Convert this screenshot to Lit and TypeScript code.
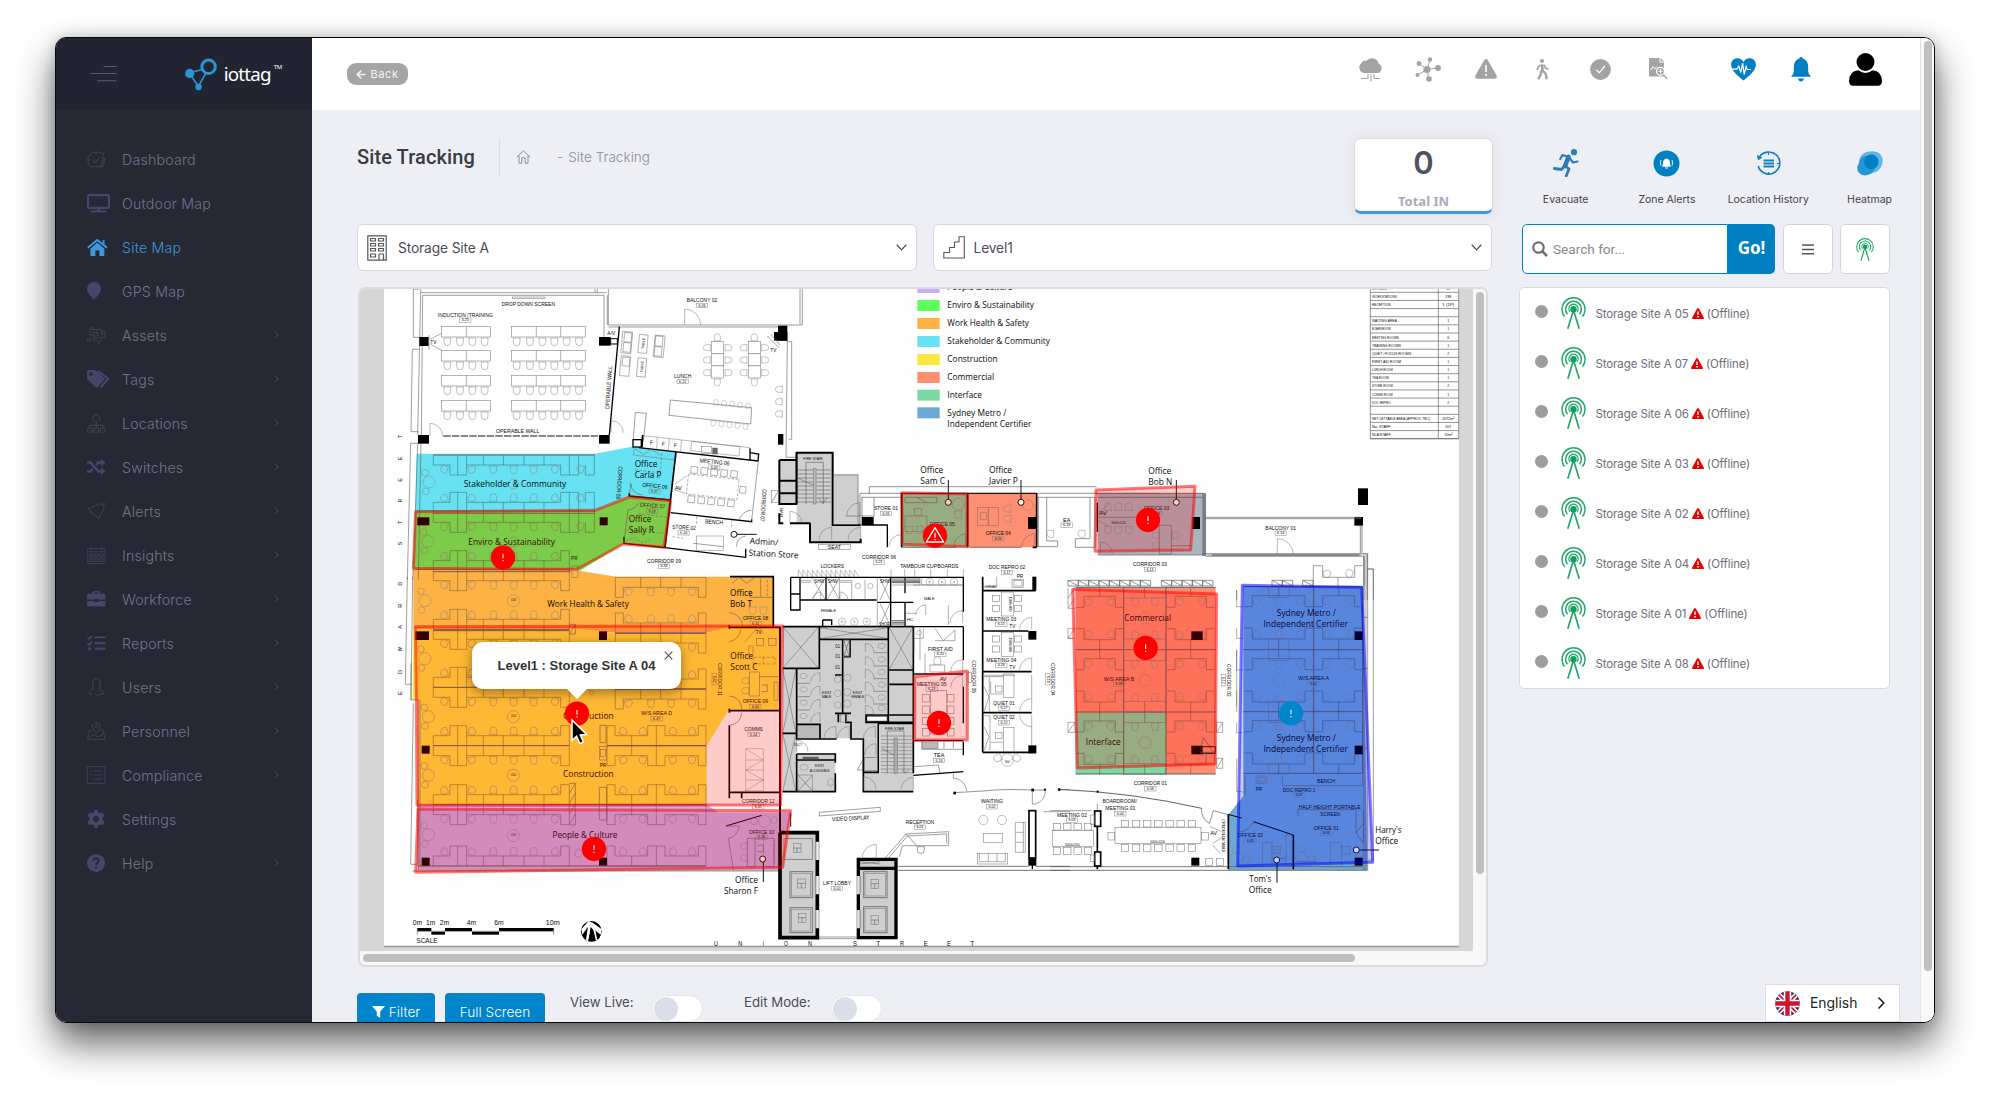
import { LitElement, html, css, svg } from "lit";
import { customElement, property } from "lit/decorators.js";

/* ------------------------------------------------------------------ */
/* Floor plan drawing helpers. Each plan section is drawn at 3x scale. */
/* ------------------------------------------------------------------ */

type Opt = { r?: number; size?: number; a?: string; cls?: string };

const text = (x: number, y: number, s: string, w: number, cls: string, o: Opt = {}) => svg`
  <text class=${cls} x=${x} y=${y} text-anchor=${o.a ?? "middle"} dominant-baseline="central"
    textLength=${w} lengthAdjust="spacingAndGlyphs"
    font-size=${o.size ?? 18} transform=${`rotate(${o.r ?? 0} ${x} ${y})`}>${s}</text>`;

const room = (x: number, y: number, s: string, no = "", w = s.length * 9.1, r = 0, size = 18) => svg`
  ${text(x, y, s, w, "cad", { r, size })}
  ${no
    ? svg`<g transform=${`rotate(${r} ${x} ${y}) translate(${x} ${y + 16})`}>
        <rect class="thin" x="-17" y="-6" width="34" height="13"></rect>
        <text class="cad" x="0" y="1" font-size="11" text-anchor="middle" dominant-baseline="central">${no}</text></g>`
    : ""}`;

const name = (x: number, y: number, s: string, w: number, a = "middle", r = 0) =>
  text(x, y, s, w, "team", { a, r, size: 26 });

const line = (d: string, w = 1.8) => svg`<path class="ln" d=${d} stroke-width=${w}></path>`;
const wall = (d: string, w = 5) => svg`<path class="wall" d=${d} stroke-width=${w}></path>`;
const fill = (d: string, c: string) => svg`<path d=${d} fill=${c}></path>`;
const col = (x: number, y: number, w: number, h: number) =>
  svg`<rect x=${x} y=${y} width=${w} height=${h} fill="#000"></rect>`;
const box = (x: number, y: number, w: number, h: number, f = "none", sw = 1.6, c = "#747474") =>
  svg`<rect x=${x} y=${y} width=${w} height=${h} fill=${f} stroke=${c} stroke-width=${sw}></rect>`;
const ring = (x: number, y: number, r: number) =>
  svg`<circle class="thin" cx=${x} cy=${y} r=${r}></circle>`;
const chair = (x: number, y: number, r = 0, s = 1) => svg`
  <path class="thin" transform=${`translate(${x} ${y}) rotate(${r}) scale(${s})`}
    d="M-12 -11H12M-10 -11V2a10 10 0 0 0 20 0V-11"></path>`;
const swivel = (x: number, y: number, r: number) => svg`
  <g transform=${`translate(${x} ${y}) rotate(${r})`}><path class="thin" d="M-9 -9H8V8M9 9A12 12 0 1 1 -9 -9"></path></g>`;
const pin = (x: number, y: number, d: string) => svg`
  <path d=${d} stroke="#111" stroke-width="3" fill="none"></path>
  <circle cx=${x} cy=${y} r="9" fill="#fff" stroke="#111" stroke-width="3"></circle>`;
const door = (x: number, y: number, r: number, sx: number, sy: number) =>
  line(`M${x} ${y}V${y + r * sy}A${r} ${r} 0 0 ${sx * sy < 0 ? 1 : 0} ${x + r * sx} ${y}`, 1.3);
const section = (x: number, y: number, body: unknown) =>
  svg`<g transform=${`translate(${x} ${y}) scale(.333333)`}>${body}</g>`;

const deskRow = (y: number, d: number, full = false) => svg`
  <g transform=${`translate(0 ${y}) scale(1 ${d})`}>
    <path class="desk" d=${"M250 0V30H300V60H323V0M323 60H350V0M350 30H400V0M400 30H582V0M460 0V30M522 0V30M582 30H632V60H658V0" +
      (full ? "M658 60H686V0M706 30V60H733V0" : "")}></path>
    ${[285, 617, ...(full ? [693] : [])].map((x) => swivel(x, 42, 20))}
    ${swivel(364, 42, 250)}
    ${[430, 491, 551].map((x) => chair(x, 44))}
  </g>`;

const deskRowEast = (y: number, d: number, kind: number) => svg`
  <g transform=${`translate(0 ${y}) scale(1 ${d})`}>
    <path class="desk" d=${kind === 1
      ? "M796 0V60H820V30H872V0M872 30H993V0M932 0V30M993 30H1045V60H1068V0M796 0H1068"
      : "M771 0V60H795V30H893V60H945V30H1045V60H1068V0M845 0V30M919 0V60M771 0H1068"}></path>
    ${kind === 1 ? [903, 963].map((x) => chair(x, 44)) : [swivel(880, 42, 20), swivel(967, 42, 250)]}
    ${swivel(kind === 1 ? 834 : 818, 42, 250)} ${swivel(1028, 42, 20)}
  </g>`;

const podTable = (x: number, y: number) => svg`${ring(x, y, 18)}${ring(x - 12, y - 28, 10)}${ring(x - 10, y + 28, 10)}`;

const pod = (x: number, y: number, w: number) => svg`
  <path class="desk" d=${`M${x} ${y + 60}h24v-33h${w - 48}v33h24M${x} ${y + 124}h24v33h${w - 48}v-33h24M${x + w / 2} ${y}v27M${x + w / 2} ${y + 157}v30`}></path>
  ${swivel(x + 36, y + 42, 250)}${swivel(x + w - 36, y + 42, 20)}
  ${swivel(x + 36, y + 143, 180)}${swivel(x + w - 36, y + 143, 90)}`;

const zone = (pts: string, c: string) =>
  svg`<polygon points=${pts} fill=${c} fill-opacity=".2" stroke=${c} stroke-opacity=".52" stroke-width="9" stroke-linejoin="round"></polygon>`;

const marker = (x: number, y: number, c = "#ff0000", kind = "bang") => svg`
  <circle cx=${x} cy=${y} r="36.5" fill=${c}></circle>
  ${kind === "bang"
    ? svg`<path d=${`M${x} ${y - 11}v14M${x} ${y + 8}v4`} stroke="#fff" stroke-width="3.2"></path>`
    : svg`<path d=${`M${x} ${y - 24}l26 43h-52z`} fill="none" stroke="#fff" stroke-width="4" stroke-linejoin="round"></path>
        <path d=${`M${x} ${y - 9}v15M${x} ${y + 10}v4`} stroke="#fff" stroke-width="4"></path>`}`;

const range = (n: number) => Array.from({ length: n }, (_, i) => i);
const zig = (x0: number, x1: number, y0: number, y1: number, step: number) => {
  let d = `M${x0} ${y0}H${x1}M${x0} ${y1}H${x1}`;
  for (let x = x0; x + step <= x1 + 2; x += step) d += `M${x} ${y0}V${y1}M${x} ${y0}L${x + step} ${y1}V${y0}`;
  return d;
};

/* ---- team colours under the linework ---- */
const teamFills = svg`
  ${section(350, 280, svg`
    ${fill("M200 521H735L845 500L978 516L962 660L838 648L735 693H196Z", "#66e2f2")}
    ${fill("M196 693H735L838 648L962 660L945 805L822 790L690 872H190Z", "#5cff5c")}`)}
  ${section(350, 580, svg`
    ${fill("M190 -32H660L800 -10H1270V142H1140L1070 158H800L690 148H190Z", "#feb244")}
    ${fill("M190 148H690L800 160H1070L1140 140H1290V392H1135L1070 497V680H203V360H188Z", "#fee642")}
    ${fill("M205 672H1068L1105 697H1322L1298 868H205Z", "#c8aeee")}`)}
  ${section(790, 280, svg`${fill("M335 640H533V802H335Z", "#7dd7a2")}${fill("M535 640H740V802H535Z", "#fe8f71")}`)}
  ${section(1060, 280, svg`${fill("M113 640H433V825H113Z", "#a8b5c1")}`)}
  ${section(1050, 560, svg`
    ${fill("M77 82H497V642H77Z", "#fe8f71")}${fill("M77 458H348V642H77Z", "#7dd7a2")}
    ${fill("M580 80H938L952 930H537V762L580 708Z", "#6ea8d4")}`)}`;

/* ---- north-west: training, lunch, stakeholder, enviro ---- */
const northWest = section(350, 280, svg`
  ${line("M190 27V172H210M187 208H206M187 208L183 455H205M212 27V38L203 465M218 46L214 465M212 38H770M218 46H762V172M775 27V135H1357V27M1350 27V133M190 27L205 28M205 490H182L172 900M203 490L196 700L188 900M213 490L205 900")}
  ${line("M772 46V135M775 141H1312M1312 182L1308 532H1345M1325 185V478H1316M1325 185H1312M735 27V38M742 27V38")}
  ${box(487, 51, 100, 5)}
  ${col(208, 171, 28, 27)}${col(747, 171, 35, 26)}${box(782, 176, 20, 16, "#fff", 3, "#000")}
  ${col(204, 465, 33, 26)}${col(747, 465, 32, 26)}${col(1284, 137, 28, 45)}${col(1272, 156, 40, 26)}${col(1284, 462, 16, 32)}
  ${col(202, 712, 36, 24)}${col(749, 712, 24, 24)}
  ${wall("M808 140L778 465", 4)}
  <path d="M280 468H747" stroke="#111" stroke-width="3" stroke-dasharray="22 4"></path>
  ${[139, 211, 286, 361].map((y) => svg`
    ${box(275, y, 147, 32)}${line(`M349 ${y}v32`, 1.4)}${box(484, y, 222, 32)}${line(`M559 ${y}v32M632 ${y}v32`, 1.4)}
    ${[292, 330, 367, 404, 500, 540, 577, 613, 650, 687].map((x) => chair(x, y + 46))}`)}
  ${line("M237 165V210M240 178L275 160M240 192L275 211", 1.5)}
  ${door(240, 468, 38, 1, -1)}${door(1004, 135, 48, 1, -1)}${door(784, 458, 36, 1, -1)}
  ${room(535, 71, "DROP DOWN SCREEN", "", 160)}${room(346, 104, "INDUCTION /TRAINING", "6.25", 165)}
  ${room(503, 453, "OPERABLE WALL", "", 130)}${room(776, 323, "OPERABLE WALL", "", 130, -86)}
  ${room(1056, 60, "BALCONY 02", "6.26", 92)}${room(998, 288, "LUNCH", "6.22", 52)}
  ${room(250, 187, "TV", "", 18)}${room(1270, 209, "TV", "", 18)}${room(784, 160, "A/V", "", 24)}
  ${line("M1252 168L1287 203M1262 162L1290 195")}
  ${[[1085, 1102], [1195, 1213]].map(([x, c]) => svg`
    ${box(x, 184, 36, 110)}${line(`M${x} 221h36M${x} 257h36`)}
    ${[203, 240, 278].map((y) => svg`${chair(x - 14, y, 90, 0.9)}${chair(x + 50, y, -90, 0.9)}`)}
    ${chair(c, 172, 180, 0.9)}${chair(c, 307, 0, 0.9)}`)}
  <g transform="rotate(5 830 190)">${box(815, 155, 30, 65)}${box(821, 158, 22, 28)}${box(821, 188, 22, 28)}${box(866, 160, 26, 55)}
    ${box(913, 158, 30, 65)}${box(915, 160, 22, 30)}${box(915, 192, 22, 28)}${box(817, 228, 28, 60)}${box(822, 232, 22, 26)}${box(868, 230, 26, 56)}</g>
  ${room(880, 190, "TABLE", "", 34, -85, 10)}${room(876, 260, "TABLE", "", 34, -85, 10)}
  ${line("M961 360L1205 383L1202 432L957 406Z")}
  ${[0, 1, 2, 3, 4].map((i) => svg`${chair(1098 + i * 24, 367 + i * 2.5, 185, 0.7)}${chair(1090 + i * 24, 430 + i * 2.5, 5, 0.7)}`)}
  ${[328, 365, 402].map((y) => chair(1287, y, 90, 0.9))}
  ${line("M856 397L889 400L880 482L850 478Z")}
  ${box(849, 479, 25, 22, "#fff", 4, "#000")}${wall("M878 465L876 502")}${wall("M866 503L1225 543", 4)}${wall("M1200 505V540M1200 518L1226 522L1224 543", 4)}
  ${line("M880 467L1200 503M922 472L920 508M958 476L955 512M994 480L992 514M1025 484L1170 500L1167 528L1022 512Z", 1.3)}
  ${box(1054, 500, 30, 20)}${box(1088, 504, 14, 18, "#666")}
  ${text(904, 488, "F", 9, "cad", { r: 5 })}${text(940, 492, "F", 9, "cad", { r: 5 })}${text(976, 496, "F", 9, "cad", { r: 5 })}
  ${deskRow(525, 1, true)}${deskRow(697, -1, true)}${deskRow(697, 1, true)}${deskRow(872, -1)}
  ${line("M250 525H735", 3)}${line("M200 693H735M250 700H735", 2.5)}${line("M196 868H660M250 875H660", 3)}
  ${podTable(237, 606)}${podTable(233, 784)}${ring(490, 612, 15)}${ring(490, 786, 15)}
  ${room(808, 608, "CORRIDOR 08", "", 98, 94)}${room(1240, 676, "CORRIDOR 07", "", 98, 94)}
  ${wall("M978 516L945 803")}${wall("M838 640V648L962 660")}${wall("M822 770V790L945 803", 4)}
  ${wall("M945 803L1187 832V806", 4)}${wall("M962 698L1205 725V718", 4)}
  ${line("M1225 543L1205 720M840 608A40 40 0 0 0 876 645M845 612L838 640M866 668A40 40 0 0 1 834 690M834 690L824 770M1160 800A30 30 0 0 1 1187 768M1205 690A45 45 0 0 0 1166 722")}
  ${line("M853 505L850 525L975 540M855 505L880 524L905 508L930 526", 1.3)}
  <path class="dash" d="M935 520L930 595M855 570L930 578M865 700L948 712M830 750L945 760M828 785L850 772L880 790L905 775M1040 710V735M1145 720V742M968 770L1000 775"></path>
  ${room(915, 618, "OFFICE 06", "6.27", 76, 6)}${room(908, 677, "OFFICE 07", "6.28", 76, 5)}
  ${room(1094, 546, "MEETING 06", "6.32", 90, 6)}${room(1092, 726, "BENCH", "", 54, 3)}
  ${room(1002, 742, "STORE 02", "6.33", 72, 3)}${room(942, 842, "CORRIDOR 09", "6.39", 102)}
  <g transform="rotate(6 1088 619)"><path class="dash" d="M1012 590H1165V650H1012Z"></path>
    ${range(5).map((i) => svg`${box(1018 + i * 30, 566, 20, 20)}${box(1018 + i * 30, 654, 20, 20)}`)}${box(1170, 610, 18, 20)}</g>
  ${line("M975 612L1010 588M975 630L1006 640", 1.3)}${room(985, 624, "AV", "", 22)}
  ${box(1040, 768, 80, 44, "none", 1.4)}${line("M1030 790L1120 800")}${room(673, 834, "PR", "", 20)}${box(666, 858, 18, 34)}
  ${name(495, 611, "Stakeholder & Community", 308)}${name(485, 787, "Enviro & Sustainability", 260)}
  ${name(854, 553, "Office", 68, "start")}${name(854, 586, "Carla P", 80, "start")}
  ${name(836, 717, "Office", 68, "start")}${name(836, 751, "Sally R", 76, "start")}
  ${name(1199, 782, "Admin/", 86, "start", 4)}${name(1196, 818, "Station Store", 150, "start", 3)}
  ${pin(1152, 763, "M1160 763H1220")}
  ${[["T", 470], ["E", 535], ["E", 600], ["R", 662], ["T", 727], ["S", 790], ["D", 912]].map(([c, y]) => text(149, y as number, c as string, 11, "cad", { r: -90, size: 18 }))}
  ${fill("M1288 540H1340V672H1288Z", "#d0d0d0")}${wall("M1288 540H1340M1288 602H1340M1288 640H1340M1288 540V672H1340V518M1288 700V730H1300", 6)}
  ${box(1264, 632, 22, 36)}${line("M1264 668L1286 632")}${room(1297, 697, "RVR", "", 26, -90, 11)}`);

/* ---- north-centre: legend, stair, offices 04/05 ---- */
const legend: [string, string, number, number][] = [
  ["#c8aeee", "People & Culture", 6, 195], ["#5cff5c", "Enviro & Sustainability", 60, 260],
  ["#feb244", "Work Health & Safety", 114, 245], ["#66e2f2", "Stakeholder & Community", 168, 308],
  ["#fee642", "Construction", 222, 151], ["#fe8f71", "Commercial", 276, 140],
  ["#7dd7a2", "Interface", 329, 104], ["#6ea8d4", "Sydney Metro /", 382, 177],
];
const northCentre = section(790, 280, svg`
  ${legend.map(([c, s, y, w]) => svg`<rect x="382" y=${y} width="67" height="33" fill=${c}></rect>${name(472, y + 16, s, w, "start")}`)}
  ${name(472, 433, "Independent Certifier", 252, "start")}
  ${fill("M20 518H128V582H205V640L212 735V785H60V730H20Z", "#cfcfcf")}
  ${wall("M20 672V518H128V735H212M60 728V787H212V776M0 730H60M0 672H22", 6)}
  ${box(130, 585, 74, 148, "none", 2)}${line("M48 547H100V672M48 547V672")}
  ${line(range(9).map((i) => `M24 ${570 + i * 12}H122`).join(""))}${box(70, 565, 8, 107, "#bbb")}${line("M24 595L70 615M86 655L98 670L110 655")}
  ${room(69, 537, "FIRE STAIR", "", 58, 0, 12)}
  ${door(210, 708, 40, -1, -1)}${door(125, 780, 38, -1, -1)}${door(212, 780, 38, -1, -1)}${door(0, 730, 36, 1, -1)}
  ${line("M168 708H250")}${box(85, 793, 97, 15)}${room(133, 800, "SEAT", "", 40)}
  ${line("M238 642V620H920M210 640H1110M214 652H335M740 652H915M210 640V735M216 652V711M252 652V711M745 652V800H803V783H770V652M915 652V802H856V776H900V652", 2)}
  ${wall("M335 640H740", 3)}
  ${col(215, 711, 36, 24)}${col(714, 711, 26, 36)}${wall("M215 735H292V802", 4)}${wall("M335 640V802M533 640V802M740 640V802M728 802H740", 5)}
  ${line("M335 802H500M538 802H694", 2.5)}${door(333, 800, 36, -1, -1)}${door(528, 798, 36, -1, -1)}${door(733, 800, 38, -1, -1)}
  ${box(563, 682, 62, 54)}${line("M595 682V736")}${box(572, 698, 18, 20)}${chair(652, 686, 90)}${chair(652, 716, 90)}${ring(714, 676, 16)}
  ${box(345, 708, 66, 46)}${box(374, 686, 20, 20)}${chair(358, 750)}${chair(390, 750)}${ring(505, 672, 18)}${chair(505, 704)}
  ${line("M345 652H440V668H345ZM380 652L410 668")}
  ${room(288, 684, "STORE 01", "6.31", 72)}${room(267, 830, "CORRIDOR 06", "6.21", 102)}${room(127, 858, "LOCKERS", "", 70)}
  ${room(418, 858, "TAMBOUR CUPBOARDS", "", 175)}${room(651, 861, "DOC REPRO 02", "6.17", 110)}
  ${room(457, 732, "OFFICE 05", "", 75)}${room(625, 760, "OFFICE 04", "6.20", 75)}${room(830, 719, "EA", "6.19", 22)}
  ${swivel(783, 760, 0)}${swivel(877, 760, 0)}
  <path class="thin" d=${"M25 890" + range(13).map(() => `l0 -20l14 20`).join("")}></path>
  ${line("M303 890V868M344 890V868M374 890V868M422 890V868M472 890V868M520 890V868", 1.3)}
  ${name(391, 569, "Office", 69, "start")}${name(391, 602, "Sam C", 74, "start")}
  ${name(597, 569, "Office", 69, "start")}${name(597, 602, "Javier P", 87, "start")}
  ${pin(475, 667, "M475 600V658")}${pin(693, 667, "M693 600V658")}`);

/* ---- north-east: schedule, balcony, office 03 ---- */
const schedule = [
  ["OFFICES", "13"], ["WORKSTATIONS", "198"], ["RECEPTION", "1 (1P)"], ["", ""], ["WAITING AREA", "1"], ["BOARDROOM", "1"],
  ["MEETING ROOMS", "6"], ["TRAINING ROOMS", "1"], ["QUIET / FOCUS ROOMS", "2"], ["FIRST AID ROOM", "1"], ["LUNCH ROOM", "1"],
  ["TEA ROOM", "1"], ["STORE ROOM", "2"], ["COMMS ROOM", "1"], ["DOC REPRO", "2"], ["", ""],
  ["NET LETTABLE AREA (APPROX. TBC)", "2072m²"], ["No. STAFF", "207"], ["NLA/STAFF", "10m²"],
];
const northEast = section(1060, 280, svg`
  ${line("M931 20V476H1196V20M1135 20V476" + schedule.map((_, i) => `M931 ${37 + i * 24.4}H1196`).join(""), 2)}
  ${schedule.map(([a, b], i) => svg`
    ${a ? text(936, 25 + i * 24.4, a, a.length > 20 ? 174 : a.length * 6.2, "cad", { a: "start", size: 13 }) : ""}
    ${b ? text(1165, 25 + i * 24.4, b, b.length * 6, "cad", { size: 13 }) : ""}`)}
  ${line("M105 640H433M113 652H428", 2.5)}<rect x="427" y="640" width="11" height="188" fill="#75808a"></rect>
  ${wall("M112 668V755", 4)}${line("M116 698L150 668M116 722L150 742", 1.4)}${room(129, 700, "AV", "", 24)}
  ${[144, 175, 206].map((x) => svg`${chair(x, 680, 180)}${chair(x, 750)}`)}${room(176, 729, "3000x1200", "", 44, 0, 9)}
  ${line("M106 712H250M298 736H334V822H298ZM334 797H395")}${chair(287, 766, 90, 0.9)}${chair(287, 796, 90, 0.9)}${chair(347, 766, -90, 0.9)}
  ${door(121, 822, 36, 1, -1)}${line("M113 825H430", 2)}
  ${col(397, 711, 23, 36)}${col(894, 625, 30, 50)}${col(883, 711, 26, 26)}
  ${line("M437 712H905M437 716H905M901 738V820M906 738V820M428 821H922V960M436 829H912V918M440 825H905", 2)}
  <path d="M455 825H898" stroke="#777" stroke-width="5"></path>
  ${door(652, 824, 48, 1, -1)}${line("M922 867H940V960M912 829L912 960")}
  ${room(290, 685, "OFFICE 03", "6.18", 76)}${room(662, 743, "BALCONY 01", "6.14", 92)}${room(270, 852, "CORRIDOR 03", "6.13", 102)}
  ${line(zig(24, 272, 901, 918, 31) + zig(304, 458, 901, 918, 31) + zig(636, 698, 901, 918, 31) + zig(728, 760, 901, 918, 31), 2)}
  ${line("M760 857V920M760 857H788V892H884V857H908M834 892V920M530 930V960")}${swivel(799, 880, 250)}${swivel(870, 880, 20)}
  ${name(265, 573, "Office", 69, "start")}${name(265, 606, "Bob N", 72, "start")}${pin(349, 667, "M349 600V658")}`);

/* ---- south-west: work health, construction, people ---- */
const southWest = section(350, 580, svg`
  ${deskRow(-28, 1)}${[148, 322, 497].map((y) => svg`${deskRow(y, -1)}${deskRow(y, 1)}`)}${deskRow(674, -1)}${deskRow(674, 1)}${deskRow(858, -1)}
  ${deskRowEast(-8, 1, 1)}${deskRowEast(159, -1, 1)}${deskRowEast(159, 1, 1)}${deskRowEast(327, -1, 1)}${deskRowEast(327, 1, 1)}
  ${deskRowEast(497, -1, 2)}${deskRowEast(497, 1, 2)}${deskRowEast(674, -1, 2)}${deskRowEast(674, 1, 2)}${deskRowEast(858, -1, 2)}
  ${line("M250 148H658M250 152H658M250 322H658M250 497H658M250 674H1068M796 160H1068M796 327H1068M771 497H1068M203 858H1068", 3)}
  ${[62, 236, 410, 586, 764].map((y) => podTable(y < 300 ? 225 : 235, y))}
  ${[62, 410, 586, 767].map((y) => svg`${ring(490, y, 18)}${text(490, y, "1200", 16, "cad", { size: 8 })}`)}
  ${line("M172 -10L166 313H186M188 -10L183 360H205V870M210 360V860M183 360V250M183 853H203V660M182 853L190 370M658 133H676V162H658M658 162L676 133M658 610H676V735H658M658 640L676 610M658 670L676 640M658 702L676 672M658 733L676 702M750 436H768V488H750ZM750 622H770V720H748V622")}
  ${col(196, 154, 41, 26)}${col(747, 154, 24, 26)}${col(215, 497, 24, 24)}${col(215, 833, 24, 24)}${col(747, 833, 24, 24)}
  ${box(748, 500, 22, 40)}${box(752, 508, 14, 22)}${room(759, 556, "PR", "", 20)}${ring(686, 820, 12)}${ring(725, 338, 6)}
  ${wall("M1140 -10H1270V140M1138 136V146M1138 142H1290V640", 5)}${wall("M1138 386V398M1138 392H1290M1138 436V655M1138 637H1290M1175 637V655", 5)}
  ${wall("M1290 142V870", 6)}${line("M1270 52H1200M1200 30V52M1232 -5V50M1145 10L1168 -8L1190 10L1215 -8M1138 98A42 42 0 0 1 1178 140M1138 185A40 40 0 0 0 1172 148M1138 348A38 38 0 0 1 1175 388M1138 436A38 38 0 0 0 1175 398")}
  ${line("M1187 506H1240V632H1187ZM1187 506L1240 540L1187 570L1240 600L1187 632M1187 540H1240M1187 570H1240M1187 600H1240", 1)}
  ${box(1198, 276, 30, 72)}${chair(1186, 302, 90, 0.9)}${chair(1186, 332, 90, 0.9)}${line("M1235 315H1252V335H1235M1228 290H1290")}
  ${box(1219, 176, 22, 20)}${box(1256, 176, 22, 20)}${box(1272, 306, 12, 56)}${box(1197, 198, 12, 30)}${chair(1208, 92)}${chair(1240, 92)}${line("M1185 185L1225 140L1240 160", 1.4)}
  <path class="dash" d="M1210 232V252M1240 232V252M1275 232V252M1212 232H1275M1212 252H1275M1252 0V50M1272 780V850M1240 775V855"></path>
  ${wall("M1322 700V740M1128 738L1235 706", 3)}${line("M1135 775L1150 870M1168 738A40 40 0 0 1 1135 775M1128 738L1168 738M1192 775H1215V860H1192ZM1215 775H1272V860H1245M1222 796H1240V815H1222")}
  ${ring(1243, 724, 18)}${ring(1212, 724, 10)}${ring(1272, 720, 10)}${chair(1182, 798, 90, 0.9)}${chair(1182, 834, 90, 0.9)}
  ${line("M203 870H1290M187 873H1290", 2)}
  ${room(1217, 115, "OFFICE 08", "6.41", 76)}${room(1226, 155, "TV", "", 18)}${room(1216, 363, "OFFICE 09", "6.43", 76)}
  ${room(1211, 447, "COMMS", "6.44", 55)}${room(1225, 664, "CORRIDOR 12", "6.45", 98)}${room(1109, 298, "CORRIDOR 11", "6.42", 98, 90)}
  ${room(920, 400, "W/S AREA D", "6.47", 92)}${room(1235, 755, "OFFICE 10", "6.46", 76)}
  ${name(714, 72, "Work Health & Safety", 245)}${name(715, 409, "Construction", 152)}${name(715, 581, "Construction", 152)}${name(705, 764, "People & Culture", 195)}
  ${name(1140, 38, "Office", 68, "start")}${name(1140, 71, "Bob T", 66, "start")}${name(1141, 229, "Office", 68, "start")}${name(1141, 262, "Scott C", 82, "start")}
  ${name(1224, 899, "Office", 69, "end")}${name(1224, 933, "Sharon F", 102, "end")}${pin(1238, 837, "M1240 846V906")}
  ${[["R", 77], ["A", 141], ["W", 208], ["D", 276], ["E", 340]].map(([c, y]) => text(149, y as number, c as string, 12, "cad", { r: -90, size: 18 }))}
  ${[["U", 1098], ["N", 1171], ["I", 1240]].map(([c, x]) => text(x as number, 1091, c as string, c === "I" ? 4 : 12, "cad", { size: 19 }))}
  ${[["0m", 202], ["1m", 242], ["2m", 283], ["4m", 364], ["6m", 447], ["10m", 608]].map(([c, x]) => text(x as number, 1027, c as string, (c as string).length * 14, "cad", { size: 20 }))}
  ${text(199, 1081, "SCALE", 64, "cad", { size: 21, a: "start" })}
  ${col(202, 1044, 42, 9)}${col(244, 1055, 41, 9)}${col(285, 1044, 81, 9)}${col(366, 1055, 81, 9)}${col(447, 1044, 164, 9)}${line("M202 1044V1064M611 1044V1064M202 1054H611", 2)}
  <circle cx="724" cy="1054" r="31" fill="#000"></circle>
  <path d="M716 1023L694 1048L697 1064L714 1040L708 1080L716 1085L722 1040L752 1064L755 1048L728 1028Z" fill="#fff"></path>
  <path d="M724 1044L750 1072L734 1084H714Z" fill="#000"></path><path d="M714 1028L730 1050L738 1082L742 1080L733 1036Z" fill="#fff"></path>`);

/* ---- building core: amenities, lifts, reception ---- */
const core = section(770, 560, svg`
  ${fill("M38 200H146V325H38ZM150 203H355V236H150ZM358 203H428V488H358ZM38 327H150V238H352V465H290V487H325V535H80V695H38Z", "#cfcfcf")}
  ${fill("M330 490H430V695H280V640H330ZM82 585H196V695H82ZM280 535H325V640H280Z", "#cfcfcf")}
  ${fill("M82 495H150V535H82Z", "#bbb")}
  ${line("M38 200L146 325M146 200L38 325M150 203L355 236M150 236L355 203M358 203L428 328M428 203L358 328M38 327L78 520M78 327L38 520M38 520L78 695M78 520L38 695", 1.5)}
  ${wall("M38 325H148V238H355V465H288V487H428M38 200H430M148 200V238M355 200V487M358 330H430M358 373H430M358 465H430M80 328V520M38 520H80M80 493H150V537H200M150 537H80V520M195 460H243M195 345H215M218 238V460M222 290H240V240M205 460V487M228 460V487H243V537H280V695H430", 5)}
  ${wall("M325 490V637H280M430 200V640M38 695H196V640M80 582H196V608M80 582V697M80 600H196M325 490H430", 5)}
  ${wall("M62 52H580V60M62 52V150H90V52M62 102H90M90 120H320M168 52V120M322 127H430M362 52V200M405 52V100M405 127V200M430 200H580M158 180H185V195M158 180V200M430 342H580M430 542H580", 4)}
  ${wall("M580 60V155M580 200V300M580 380V490M580 545V586M430 646L580 635", 4)}
  ${line("M330 55L360 120M360 55L330 120M127 55L165 118M165 55L127 118M172 55L208 118M208 55L172 118M330 130L360 195M360 130L330 195M245 60V118M285 60V118M90 62H125M90 67H125M208 62H243M208 67H243M365 55H450V75H365M408 160H440M455 55V75H578M322 52V200M208 118V55M430 75H580M535 135V195M432 205V280M460 205V235H432M465 280V340H432M480 315H524V336H480ZM495 205L520 242L555 210V242H495M450 300V205", 1.5)}
  ${line("M365 60H450M365 64H450M365 68H450M365 182H402M365 187H402M365 192H402", 3)}
  ${[264, 301].map((x) => svg`${ring(x, 78, 8)}`)}${[479, 516, 552].map((x) => svg`${ring(x, 66, 11)}${ring(x, 66, 3)}`)}${[216, 253, 290].map((x) => svg`${ring(x, 185, 11)}${ring(x, 185, 3)}`)}
  ${[348, 388, 428, 468].map((y, i) => svg`<ellipse class="thin" cx="101" cy=${y} rx="11" ry="8"></ellipse>${i < 3 ? line(`M82 ${y + 22}H120`) : ""}${door(150, y + 18, 28, -1, -1)}`)}
  ${[258, 298, 336, 374, 412, 444].map((y) => svg`<ellipse class="thin" cx="335" cy=${y} rx="11" ry="8"></ellipse>${line(`M310 ${y + 20}H352`)}${door(286, y + 18, 26, 1, -1)}`)}
  ${[358, 400, 435].map((y) => svg`${ring(203, y, 10)}${ring(232, y - 4, 11)}`)}
  ${box(221, 240, 17, 50)}${line("M221 240L238 290M238 240L221 290")}${box(290, 468, 62, 16, "none", 3, "#111")}${box(212, 464, 17, 22)}
  ${door(198, 535, 36, -1, -1)}${door(238, 535, 36, -1, -1)}${door(316, 535, 36, -1, -1)}${door(80, 575, 34, 1, -1)}${door(318, 585, 34, -1, -1)}${door(430, 688, 36, -1, -1)}${door(280, 688, 38, 1, -1)}
  ${door(467, 165, 30, -1, -1)}${door(578, 190, 38, -1, -1)}${door(578, 335, 36, -1, -1)}${door(152, 120, 24, -1, -1)}${door(210, 120, 24, 1, -1)}${door(578, 382, 36, -1, -1)}
  ${line(range(11).map((i) => `M333 ${528 + i * 11}H427`).join(""), 1.4)}${box(372, 534, 10, 106, "#aaa")}${line("M335 565L372 585M395 628L406 640L416 628M352 513H402V640M352 513V640")}
  ${box(84, 645, 44, 48)}${line("M84 645L128 693M128 645L84 693M262 630L278 600V630Z")}<ellipse class="thin" cx="102" cy="622" rx="12" ry="9"></ellipse><ellipse class="thin" cx="182" cy="667" rx="9" ry="11"></ellipse>
  ${line("M98 592H146M98 596H146", 4)}${box(284, 592, 38, 40, "none", 2)}
  ${room(175, 151, "FEMALE", "", 46, 0, 13)}${room(478, 116, "MALE", "", 32, 0, 13)}${room(148, 64, "SHW", "", 30, 0, 14)}${room(188, 64, "SHW", "", 30, 0, 14)}${room(345, 64, "SHW", "", 30, 0, 14)}${room(343, 194, "SHOR", "", 32, 0, 14)}
  ${room(420, 179, "HC", "", 20, 0, 12)}${room(203, 259, "01", "", 14, 0, 14)}${room(203, 291, "01", "", 14, 0, 14)}${room(203, 322, "01", "", 14, 0, 14)}
  ${room(170, 397, "EXIST", "", 28, 0, 12)}${room(170, 410, "MALE", "", 28, 0, 12)}${room(263, 397, "EXIST", "", 28, 0, 12)}${room(263, 410, "FEMALE", "", 38, 0, 12)}
  ${room(149, 618, "EXIST", "", 28, 0, 12)}${room(149, 632, "ACCESSIBLE", "", 60, 0, 12)}${room(374, 505, "FIRE STAIR", "", 58, 0, 12)}${room(84, 556, "DUCT", "", 24, 0, 10)}
  ${room(511, 266, "FIRST AID", "6.20", 74)}${room(519, 356, "AV", "", 20)}${room(485, 371, "MEETING 05", "6.23", 90)}${room(507, 585, "TEA", "6.24", 32)}${room(613, 350, "CORRIDOR 05", "", 98, 90)}
  ${box(594, 338, 11, 30)}${ring(447, 218, 7)}${chair(502, 302, 180)}
  ${box(482, 392, 47, 130)}${range(4).map((i) => svg`${box(458, 404 + i * 34, 20, 22)}${box(532, 404 + i * 34, 20, 22)}`)}
  ${box(458, 548, 46, 18, "#bbb")}${line("M455 542V568H578M522 545V565M550 545V565M432 620L505 615L510 640")}
  ${wall("M638 50V577M638 92H797M638 213H775M638 335H785M638 458H785M638 577H797", 5)}${col(787, 50, 12, 42)}${col(775, 213, 24, 26)}${col(775, 556, 24, 24)}
  ${[96, 218].map((y) => svg`${box(694, y, 36, 72)}${range(2).map((i) => svg`${box(668, y + 10 + i * 30, 20, 18)}${box(734, y + 10 + i * 30, 20, 18)}`)}${room(719, y + 36, "1500x900", "", 44, 90, 9)}${door(785, y + 112, 36, -1, -1)}`)}
  ${room(694, 176, "MEETING 03", "6.15", 90)}${room(727, 198, "TV", "", 18)}${room(694, 299, "MEETING 04", "6.26", 90)}${room(727, 320, "TV", "", 18)}
  ${room(702, 428, "QUIET 01", "6.27", 64)}${room(702, 472, "QUIET 02", "6.22", 64)}
  ${box(700, 342, 32, 70)}${box(700, 502, 32, 72)}${line("M642 346H735M642 350H700M658 350V455M642 380L657 410M642 455L657 410M642 467H660V572M642 500L657 530M642 572L657 530M662 365V402H697M662 547H697M785 345V415M785 500V555", 1.5)}${box(676, 378, 20, 18)}${box(676, 517, 20, 18)}
  ${door(785, 452, 36, -1, -1)}${door(785, 464, 36, -1, 1)}${line("M640 80H680V50", 1.4)}${box(726, 58, 34, 24)}${box(732, 62, 24, 16)}${room(750, 47, "PR", "", 20)}${room(662, 83, "CUPBOARD", "", 36, 0, 8)}
  ${ring(712, 600, 19)}${room(712, 609, "900", "", 14, 0, 8)}${chair(683, 594, 60)}${chair(740, 594, -60)}
  ${line("M148 757L331 742V754L148 768Z")}${room(242, 775, "VIDEO DISPLAY", "", 112, -3)}${room(450, 785, "RECEPTION", "6.01", 86)}${room(666, 724, "WAITING", "6.02", 66)}
  ${line("M345 895L408 822L536 815V857H397L388 890M355 895L412 828L530 822V850M408 822L440 857M442 860V870A10 10 0 0 0 463 870V860Z")}
  ${box(640, 820, 57, 28)}${ring(640, 780, 14)}${ring(696, 780, 14)}${box(622, 880, 90, 32)}${line("M628 880V905H706V880M655 880V905M681 880V905M736 787H766V877H736ZM760 787V877M736 817H760M736 847H760", 1.5)}
  ${line("M552 698L640 693Q700 686 787 690H825M862 689H900", 2)}${col(550, 695, 8, 8)}${col(784, 686, 8, 8)}${col(822, 686, 6, 6)}${col(865, 686, 6, 6)}${line("M550 655V640M550 655A40 40 0 0 1 590 693M787 692V732H797A40 40 0 0 0 826 692M820 755H900")}
  ${box(777, 752, 20, 142, "#fff", 5, "#000")}${col(775, 893, 24, 24)}${wall("M787 915V928", 4)}
  ${line("M385 919H776M385 931H900M797 919H900", 2.5)}
  ${fill("M30 818H142V1133H30ZM265 898H378V1133H265Z", "#cfcfcf")}
  <path class="wall" d="M30 818H142V845M142 900V948M142 1003V1050M142 1105V1133H30V818" stroke-width="11"></path>
  <path class="wall" d="M265 925V948M265 1003V1050M265 1105V1133H378V898H265V925H378" stroke-width="10"></path>
  ${box(42, 836, 85, 62, "none", 2.4)}${box(60, 935, 67, 78, "none", 3)}${box(64, 940, 58, 68)}${box(60, 1043, 67, 75, "none", 3)}${box(64, 1048, 58, 65)}
  ${box(281, 935, 70, 78, "none", 3)}${box(285, 940, 62, 68)}${box(281, 1040, 70, 78, "none", 3)}${box(285, 1045, 62, 68)}
  ${[[70, 851], [83, 957], [85, 1060], [303, 958], [303, 1067]].map(([x, y]) => svg`${box(x, y, 23, 27)}${line(`M${x} ${y + 13}h23M${x + 11} ${y + 13}v14`)}`)}
  ${line("M136 845V900M147 845V900M136 948V1003M147 948V1003M136 1050V1105M147 1050V1105M261 948V1003M271 948V1003M261 1050V1105M271 1050V1105M147 1131H261M147 1136H261")}
  ${room(201, 969, "LIFT LOBBY", "6.00", 84)}${door(319, 896, 43, -1, -1)}${line("M270 905L330 912M330 905L270 912")}
  ${[["O", 48], ["N", 120], ["S", 255], ["T", 325], ["R", 396], ["E", 467], ["E", 537], ["T", 607]].map(([c, x]) => text(x as number, 1151, c as string, 12, "cad", { size: 19 }))}`);

/* ---- south-east: commercial, interface, metro ---- */
const southEast = section(1050, 560, svg`
  ${line("M77 82H497M77 269H497M77 456H497M77 642H497M221 82V642M348 82V642", 3)}
  ${[82, 269, 456].map((y) => svg`${pod(78, y, 142)}${pod(351, y, 142)}${box(221, y, 127, 32)}${box(221, y + 155, 127, 32)}${line(`M284 ${y}v32M284 ${y + 155}v32`)}
    ${chair(255, y + 44)}${chair(315, y + 44)}${chair(255, y + 143, 180)}${chair(315, y + 143, 180)}${ring(285, y + 92, 18)}`)}
  ${line("M580 80H938M580 269H938M580 455H938M580 640H940M791 80V640M938 80V640", 3)}
  ${[80, 269, 455].map((y) => svg`${pod(583, y, 206)}${pod(794, y, 144)}${box(656, y, 61, 32)}${box(656, y + 155, 61, 32)}${chair(686, y + 44)}${chair(686, y + 143, 180)}${ring(686, y + 93, 18)}`)}
  ${line("M54 82V145H75M54 115L75 82M54 145L75 115M54 205V235H70L54 235L75 205ZM54 487H75V517H54ZM54 517L75 487M500 487H518V517H500ZM500 517L518 487M500 595H518V625H500ZM500 625L518 595M560 90V140H578M560 205V235H578M560 269V330H578M560 392V440M560 487V518H578M560 595V695H578M560 269V456", 1.5)}
  ${col(424, 214, 34, 26)}${col(424, 557, 34, 26)}${col(914, 214, 24, 26)}${col(914, 557, 24, 26)}${col(914, 893, 24, 24)}${col(424, 893, 24, 24)}
  ${line("M450 577L460 532L490 577Z", 2.2)}${box(452, 560, 44, 20, "none", 3, "#111")}
  ${line("M942 -20V930M948 -20V930M953 -20V930M952 27H970V900H955M941 172H953M941 325H953M941 565H953", 1.8)}
  ${line("M0 920H535M0 931H952M537 920H938", 2.5)}
  ${wall("M535 762V928M730 825V928", 5)}${wall("M610 785L730 825M537 764L575 774", 3)}${line("M610 785A50 50 0 0 1 572 815M455 745A44 44 0 0 0 478 790L490 752L535 764M585 706V645M918 750V820L940 790M918 820L940 850V750M744 770V749H918", 2)}
  ${line("M28 688Q250 698 455 745", 3)}${col(24, 685, 7, 7)}${col(140, 692, 6, 6)}${line("M142 732V752M0 752H124")}
  ${box(134, 753, 18, 46, "#fff", 5, "#000")}${box(134, 876, 18, 42, "#fff", 5, "#000")}${wall("M142 799V876M142 918V928", 5)}
  ${box(8, 812, 122, 48)}${range(4).map((i) => svg`${box(10 + i * 31, 790, 22, 20)}${box(10 + i * 31, 863, 22, 20)}`)}${box(122, 765, 12, 28)}${box(122, 885, 12, 20)}${room(67, 854, "3000x1200", "", 44, 0, 9)}
  ${box(195, 803, 258, 48)}${range(7).map((i) => svg`${box(214 + i * 33.4, 781, 22, 20)}${box(214 + i * 33.4, 854, 22, 20)}`)}${box(174, 818, 20, 22)}${box(455, 818, 20, 22)}${room(323, 845, "6000x1200", "", 44, 0, 9)}
  ${line("M488 850L520 830M488 855L510 880M480 800L515 815", 1.4)}${box(467, 896, 20, 20)}${box(500, 896, 20, 20)}
  ${box(638, 847, 28, 72)}${box(666, 860, 26, 22)}${box(674, 868, 14, 10)}${box(842, 847, 32, 72)}${box(876, 860, 22, 22)}${ring(560, 895, 18)}${ring(558, 868, 11)}${ring(590, 898, 11)}${ring(755, 893, 18)}${ring(755, 867, 11)}${ring(785, 898, 11)}
  ${box(708, 825, 18, 92)}${line("M666 895H706M740 905H800M697 646V677H938V646")}${box(618, 648, 32, 22)}${box(624, 652, 20, 14)}${ring(658, 660, 8)}
  ${room(207, 356, "W/S AREA B", "6.09", 92)}${room(301, 670, "CORRIDOR 01", "6.08", 100)}${room(209, 724, "BOARDROOM/", "", 103)}${room(211, 745, "MEETING 01", "6.04", 90)}${room(66, 764, "MEETING 02", "6.03", 90)}
  ${room(791, 355, "W/S AREA A", "6.11", 92)}${room(828, 663, "BENCH", "", 54)}${room(747, 689, "DOC REPRO 1", "6.07", 98)}${room(839, 741, "HALF HEIGHT PORTABLE", "", 186)}${room(841, 761, "SCREEN", "", 60)}
  ${room(829, 803, "OFFICE 01", "6.06", 74)}${room(601, 826, "OFFICE 02", "6.05", 76)}${room(491, 820, "AV", "", 20)}${room(627, 686, "PR", "", 20)}
  ${room(537, 361, "CORRIDOR 02", "6.12", 98, 90)}${room(10, 358, "CORRIDOR 04", "6.16", 98, 90)}${room(520, 828, "CREDENZA/TABLE", "", 100, 90, 12)}
  ${name(293, 175, "Commercial", 140)}${name(160, 547, "Interface", 105)}
  ${name(769, 159, "Sydney Metro /", 177)}${name(767, 192, "Independent Certifier", 253)}${name(769, 534, "Sydney Metro /", 177)}${name(767, 567, "Independent Certifier", 253)}
  ${name(976, 810, "Harry's", 79, "start")}${name(976, 843, "Office", 69, "start")}${name(631, 956, "Tom's", 66)}${name(631, 990, "Office", 69)}
  ${pin(680, 900, "M681 909V968")}${pin(919, 870, "M928 870H987")}`);

/* ---- live zones ---- */
const zones = svg`
  ${section(350, 280, zone("197,695 735,691 838,651 962,662 942,802 820,792 680,868 190,865", "#ff0000"))}
  ${section(350, 580, svg`${zone("196,140 1298,138 1292,675 201,676 199,355", "#ff0000")}${zone("204,687 1322,692 1298,862 197,877", "#ff0000")}`)}
  ${section(790, 280, zone("335,638 531,642 531,800 337,793", "#ff0000"))}
  ${section(1060, 280, zone("108,630 405,619 392,810 105,814", "#ff0000"))}
  ${section(770, 560, zone("434,350 592,333 592,540 434,540", "#ff0000"))}
  ${section(1050, 560, svg`${zone("68,88 500,102 496,612 82,624", "#ff0000")}${zone("577,76 935,82 968,907 563,918", "#0000ff")}`)}`;

const markers = svg`
  ${section(350, 280, marker(459, 832))}
  ${section(350, 580, svg`${marker(681, 401)}${marker(732, 807)}`)}
  ${section(790, 280, marker(435, 767, "#ff0000", "warn"))}
  ${section(1060, 280, marker(264, 720))}
  ${section(770, 560, marker(507, 489))}
  ${section(1050, 560, svg`${marker(287, 264)}${marker(723, 460, "#0084cb")}`)}`;

@customElement("floor-plan")
class FloorPlan extends LitElement {
  static styles = css`
    :host { display: block; position: relative; overflow: hidden; background: #d6d6d6; }
    svg { display: block; }
    .cad { font-family: "Liberation Sans", sans-serif; fill: #0c0c0c; }
    .team { font-family: "Open Sans", "Noto Sans", sans-serif; fill: #0a0a0a; }
    .ln { fill: none; stroke: #5f5f5f; }
    .thin { fill: none; stroke: #858585; stroke-width: 1.5; }
    .desk { fill: none; stroke: #222; stroke-opacity: .55; stroke-width: 1.8; }
    .wall { fill: none; stroke: #000; }
    .dash { fill: none; stroke: #666; stroke-width: 1.5; stroke-dasharray: 8 5; }
    .popup { position: absolute; left: 112px; top: 353px; width: 209px; height: 47px; border-radius: 11px; background: #fff;
      display: flex; align-items: center; justify-content: center; box-shadow: 0 3px 12px rgba(0,0,0,.4);
      font: 700 13px "Liberation Sans", Arial, sans-serif; color: #333; white-space: nowrap; }
    .tip { position: absolute; left: 95px; top: 47px; width: 20px; height: 10px; background: #fff; clip-path: polygon(0 0, 100% 0, 50% 100%); }
    .close { position: absolute; right: 8px; top: 9px; }
    .cursor { position: absolute; left: 210px; top: 429px; }
  `;
  render() {
    return html`
      <svg width="1113" height="662" viewBox="360 289 1113 662">
        <rect x="384" y="289" width="1075" height="657" fill="#fefefe"></rect>
        <path d="M384 946.5H1459" stroke="#999" stroke-width="1.4"></path>
        ${teamFills}${northWest}${northCentre}${northEast}${southWest}${core}${southEast}${zones}${markers}
      </svg>
      <div class="popup">
        <span>Level1 : Storage Site A 04</span>
        <svg class="close" width="9" height="9" viewBox="0 0 9 9"><path d="M.7 .7L8.3 8.3M8.3 .7L.7 8.3" stroke="#555" stroke-width="1.2"></path></svg>
        <div class="tip"></div>
      </div>
      <svg class="cursor" width="22" height="30" viewBox="0 0 22 30">
        <path d="M2 2V22.5L6.6 18.3L9.8 25.6L13.4 24L10.3 16.9L16.8 16.6Z" fill="#000" stroke="#fff" stroke-width="1.5"></path>
      </svg>`;
  }
}

/* ------------------------------------------------------------------ */
/* Icons                                                               */
/* ------------------------------------------------------------------ */
const S = (w: number, h: number, vb: string, body: unknown, cls = "") =>
  html`<svg class=${cls} width=${w} height=${h} viewBox=${vb}>${body}</svg>`;
const F = (d: string) => svg`<path d=${d} fill="currentColor" fill-rule="evenodd"></path>`;
const L = (d: string, w = 1.2) => svg`<path d=${d} fill="none" stroke="currentColor" stroke-width=${w} stroke-linejoin="round" stroke-linecap="round"></path>`;

const tower = (w: number, h: number) => S(w, h, "0 0 25 32", svg`
  <g fill="none" stroke="#26a869">
    <path d="M3.6 19.6A11.5 11.5 0 1 1 21.4 19.6" stroke-width="1.5"></path>
    <path d="M6.4 17.2A7.9 7.9 0 1 1 18.6 17.2" stroke-width="1.5"></path>
    <path d="M9 14.8A4.6 4.6 0 1 1 16 14.8" stroke-width="1.3"></path>
    <path d="M12.5 13L6.8 31.8M12.5 13L18.2 31.8" stroke-width="1.7"></path>
  </g><circle cx="12.5" cy="12.2" r="3.2" fill="#0aa35c"></circle>`);

const navIcons: Record<string, unknown> = {
  Dashboard: S(19, 17, "0 0 19 17", L("M3.8 15.8Q.8 13 .8 9A8.3 8.3 0 0 1 13.6 2.2M16.4 5.4Q17.6 7 17.6 9Q17.6 13 14.6 15.8ZM3.8 15.8H14.6M15.2 3.6L17.8 .8M14.2 1.6L16.8 4M8.6 10.6L12.6 6.4M9.4 10a1.5 1.5 0 1 1 -1.4 -1M9.2 .9V3M1 9H3M15.4 9H17.4M3.5 3.8L4.9 5.1", 1)),
  "Outdoor Map": S(23, 19, "0 0 23 19", F("M2 0H21a2 2 0 0 1 2 2V13a2 2 0 0 1-2 2H13v1.5h5.5q1 0 1 1t-1 1H4.5q-1 0-1-1t1-1H10V15H2a2 2 0 0 1-2-2V2A2 2 0 0 1 2 0ZM2 2.2V12.8H21V2.2Z")),
  "Site Map": S(21, 17, "0 0 21 17", svg`${F("M10.3 3.6L17.4 9.8V16.2q0 .8-.8 .8H12.4V11.6H8.4V17H4.2q-.8 0-.8-.8V9.8Z")}<path d="M.8 8.8L10.3 .9L20 8.8M16.6 1V5.5" fill="none" stroke="currentColor" stroke-width="1.9"></path>`),
  "GPS Map": S(14, 18, "0 0 14 18", F("M7 0A7 7 0 0 1 14 7C14 11 9 15.5 7 18C5 15.5 0 11 0 7A7 7 0 0 1 7 0Z")),
  Assets: S(19, 18, "0 0 19 18", L("M3 3.5H14.5V8M16 5H18V8H15M3 3.5V10M5 1V3M6 .8a1 1 0 1 0 .1 0M6.5 6.5H11V10H6.5ZM1 12.5H4V15H1ZM5 12H15V15H7.5V10.5M12 16.5a1.2 1.2 0 1 0 .1 0M15 11H18V8M10 3.5V6.5M4 9H6.5", .9)),
  Tags: S(23, 18, "0 0 23 18", svg`${F("M0 1.5Q0 0 1.5 0H8.5L17.5 8.2Q18.3 9 17.5 9.8L10.3 17.4Q9.5 18.2 8.7 17.4L0 8.8ZM4 2.4a1.7 1.7 0 1 0 .1 0Z")}<path d="M11 .7L21.3 9L13.7 17.3" fill="none" stroke="currentColor" stroke-width="2"></path>`),
  Locations: S(19, 19, "0 0 19 19", L("M9.3 .8a3.7 3.7 0 1 0 .1 0M9.3 8.2V14M2.6 14V11.3H16V14M.6 14.2H4.8V18.2H.6ZM7.2 14.2H11.4V18.2H7.2ZM13.8 14.2H18V18.2H13.8Z", 1)),
  Switches: S(19, 16, "0 0 19 16", svg`<path d="M0 3.6H3.5L11.5 12.4H15M0 12.4H3.5L5.6 10M9.2 6L11.5 3.6H15" fill="none" stroke="currentColor" stroke-width="2.5"></path>${F("M14 0L18.5 3.7L14 7.4ZM14 8.6L18.5 12.3L14 16Z")}`),
  Alerts: S(19, 18, "0 0 19 18", L("M.8 6.5L11.8 17Q12.5 12 16 9Q18.5 5 15.5 2.5Q12 .5 8.5 3.5Q5 6.5 .8 6.5ZM15.5 2.5L17 .8L18 1.8L16.7 3.3M3 9Q2 12.5 6.3 11.8", 1)),
  Insights: S(19, 18, "0 0 19 18", L("M.6 2.5H18V17.4H.6ZM.6 5.8H18M4 .6V3.6M14.6 .6V3.6M3 8H6V11H3ZM8 8H11V11H8ZM13 8H16V11H13ZM3 12.8H6V15.6H3ZM8 12.8H11V15.6H8ZM13 12.8H16V15.6H13Z", .9)),
  Workforce: S(19, 16, "0 0 19 16", F("M5.5 2.8V1.5Q5.5 0 7 0H11.5Q13 0 13 1.5V2.8H17Q18.6 2.8 18.6 4.4V8.6H11.6V8H7V8.6H0V4.4Q0 2.8 1.6 2.8ZM7 1.5V2.8H11.5V1.5ZM0 10H7V11H11.6V10H18.6V14Q18.6 15.6 17 15.6H1.6Q0 15.6 0 14Z")),
  Reports: S(19, 16, "0 0 19 16", svg`<path d="M.6 2.6L2.2 4L5 .8M.6 8.4L2.2 9.8L5 6.6M7.5 2.4H18.6M7.5 8.2H18.6M7.5 13.8H18.6" fill="none" stroke="currentColor" stroke-width="1.9"></path><circle cx="2.6" cy="13.8" r="1.7" fill="currentColor"></circle>`),
  Users: S(17, 18, "-1 0 17 18", L("M5 10.5V8Q3.5 1 8.5 .8Q13.5 1 12 8V11M5 10.5Q5 12 2.5 13Q.8 14 .8 16H4M12 11Q12 12.5 14.5 13Q16.2 14 16.2 16H12L8.5 17.5L7 16", 1)),
  Personnel: S(19, 18, "0 0 19 18", L("M9.3 .7a3.9 3.9 0 0 1 3.9 3.9C13.2 7.5 9.3 11 9.3 11S5.4 7.5 5.4 4.6A3.9 3.9 0 0 1 9.3 .7ZM9.3 3.2a1.3 1.3 0 1 0 .1 0M4.8 8.5H2.6L.6 17.3H18.2L16.2 8.5H14M3 15Q6 11 9 14Q12 16 16 12", 1)),
  Compliance: S(19, 18, "0 0 19 18", L("M.6 .6H18V17.4H.6ZM3.5 5H4.2M7 5H15M3.5 9H4.2M7 9H15M3.5 13H4.2M7 13H15", 1)),
  Settings: S(18, 18, "0 0 18 18", F("M7.4 0H10.6L11.2 2.6L13 3.5L15.6 2.6L17.4 5.4L15.6 7.4V9.9L17.6 11.9L16 14.9L13.3 14.2L11.3 15.4L10.6 18H7.4L6.7 15.4L4.7 14.2L2 14.9L.4 11.9L2.4 9.9V7.4L.6 5.4L2.4 2.6L5 3.5L6.8 2.6ZM9 6A3 3 0 1 0 9 12A3 3 0 1 0 9 6Z")),
  Help: S(18, 18, "0 0 18 18", svg`${F("M9 0A9 9 0 1 1 9 18A9 9 0 1 1 9 0Z")}<path d="M6.2 6.8Q6.4 4.2 9 4.2Q11.8 4.3 11.8 6.6Q11.8 8 10.3 8.8Q9 9.5 9 11M9 12.6V14.6" fill="none" stroke="#262834" stroke-width="2"></path>`),
};
const solid = ["Outdoor Map", "GPS Map", "Tags", "Switches", "Workforce", "Reports", "Settings", "Help"];
const expandable = ["Assets", "Tags", "Locations", "Switches", "Alerts", "Insights", "Workforce", "Reports", "Users", "Personnel", "Compliance", "Help"];

const chevronDown = S(11, 7, "0 0 11 7", L("M1 1L5.5 5.8L10 1", 1.1));

/* ------------------------------------------------------------------ */
@customElement("side-nav")
class SideNav extends LitElement {
  static styles = css`
    :host { display: flex; flex: none; flex-direction: column; width: 256px; background: #262834; font-family: Inter, "Noto Sans", sans-serif; }
    .brand { height: 72px; background: #222432; display: flex; align-items: center; padding: 0 30px 0 34px; box-sizing: border-box; justify-content: space-between; }
    .logo { display: flex; align-items: center; color: #fff; font: 400 18.8px "Noto Sans", "Open Sans", sans-serif; }
    .word { margin-left: 7px; letter-spacing: -0.8px; }
    .tm { font-size: 6px; margin: -14px 0 0 3px; letter-spacing: -.3px; }
    nav { padding-top: 27px; }
    .item { height: 44px; display: flex; align-items: center; padding: 0 33px 0 31px; color: #73758f; font-size: 14.2px; font-weight: 300; letter-spacing: .2px; }
    .ico { width: 35px; display: flex; color: #404259; }
    .ico.solid { color: #45476a; }
    .item.active { color: #3f97d6; } .item.active .ico { color: #3f97dc; }
    .lab { flex: 1; }
    .chev { color: #4c4e69; display: flex; }
  `;
  render() {
    return html`
      <div class="brand">
        ${S(27, 18, "0 0 27 18", svg`<path d="M13.5 1.5H26.5M.5 8.5H26.5M7.5 15.7H26.5" stroke="#5b5e79" stroke-width="1.1"></path>`)}
        <div class="logo">
          ${S(32, 33, "0 0 32 33", svg`
            <g stroke="#2795d6" fill="none"><circle cx="23.6" cy="8.8" r="6.7" stroke-width="3"></circle>
            <path d="M4.5 15L17 11.5M4.5 15.5L13.5 28.5L20.5 15.5" stroke-width="1.6"></path></g>
            <circle cx="4.7" cy="15.4" r="4.6" fill="#2795d6"></circle><circle cx="13.6" cy="29" r="3.2" fill="#2795d6"></circle>`)}
          <span class="word">iottag</span><span class="tm">TM</span>
        </div>
      </div>
      <nav>
        ${Object.keys(navIcons).map((n) => html`
          <div class="item ${n === "Site Map" ? "active" : ""}">
            <span class="ico ${solid.includes(n) ? "solid" : ""}">${navIcons[n]}</span>
            <span class="lab">${n}</span>
            ${expandable.includes(n) ? html`<span class="chev">${S(5, 8, "0 0 5 8", L("M.8 .8L4 4L.8 7.2", .9))}</span>` : ""}
          </div>`)}
      </nav>`;
  }
}

@customElement("top-bar")
class TopBar extends LitElement {
  static styles = css`
    :host { display: flex; height: 72px; background: #fff; align-items: center; justify-content: space-between; padding: 0 38px 0 35px; box-sizing: border-box; flex: none; }
    .back { width: 61px; height: 22px; border-radius: 9px; background: #a5a5a5; color: #f4f4f4; display: flex; align-items: center; justify-content: center; gap: 4px;
      font: 400 11px Inter, sans-serif; letter-spacing: .6px; }
    .icons { display: flex; align-items: center; color: #a3a3a3; margin-top: -10px; }
    .icons svg { display: block; }
    .s { width: 57.5px; display: flex; justify-content: center; }
    .w { margin-left: 28px; }
    .blue { color: #0080c3; }
    .user { color: #000; width: 33px; margin-left: 19px; }
  `;
  render() {
    return html`
      <div class="back">${S(10, 9, "0 0 10 9", L("M9.2 4.5H1.4M4.8 1L1.2 4.5L4.8 8", 1.7))}<span>Back</span></div>
      <div class="icons">
        <div class="s">${S(26, 25, "0 0 26 25", svg`${F("M6 16A5.5 5.5 0 0 1 3.3 6.3A4 4 0 0 1 8.5 3.8A7 7 0 0 1 20.8 6.8A5 5 0 0 1 20 16Z")}${L("M10 17V21.5H3.5M13 17V24M16 17V21.5H21.5", 1.1)}`)}</div>
        <div class="s">${S(26, 25, "0 0 26 25", svg`${L("M12 12.5L4 6.5M12 12.5L15 3M12 12.5L23 11M12 12.5L14 22.5M12 12.5L2.5 18", 1)}<g fill="currentColor"><circle cx="12" cy="12.5" r="3.6"></circle><circle cx="4" cy="6.5" r="2.4"></circle><circle cx="15" cy="2.5" r="2.2"></circle><circle cx="23" cy="11" r="2.9"></circle><circle cx="14" cy="22" r="2.8"></circle><circle cx="2.5" cy="18" r="2"></circle></g>`)}</div>
        <div class="s">${S(22, 20, "0 0 22 20", svg`${F("M9.2 1Q11 -.8 12.8 1L21.6 16.6Q22.4 19.6 19.8 19.8H2.2Q-.4 19.6 .4 16.6Z")}<path d="M11 6V13M11 15V17" stroke="#fff" stroke-width="1.6"></path>`)}</div>
        <div class="s">${S(14, 21, "0 0 14 21", svg`<circle cx="6" cy="2.1" r="2" fill="currentColor"></circle><path d="M6.3 5.5L5.4 12.5M4.6 6L2 8.2L1.2 11M8 6L9.5 9L12.5 10.3" fill="none" stroke="currentColor" stroke-width="1.7"></path><path d="M6.2 5.5L6.6 11.5L9.5 14.5L10.8 20.3M5.5 12L4.5 16L2.2 20.3" fill="none" stroke="currentColor" stroke-width="2.4"></path>`)}</div>
        <div class="s">${S(21, 21, "0 0 21 21", svg`<circle cx="10.5" cy="10.5" r="10.4" fill="currentColor"></circle><path d="M6.3 10.7L9.2 13.8L14.8 7" fill="none" stroke="#fff" stroke-width="1.3"></path>`)}</div>
        <div class="s">${S(19, 22, "0 0 19 22", svg`${F("M0 0H10.5V4.5H15V18.5H0ZM11.6 0L15 3.4H11.6Z")}<path d="M1.5 12.5L4 8.5L6 11L8 8.5" fill="none" stroke="#fff" stroke-width="1"></path><circle cx="11.5" cy="13.3" r="4" fill="currentColor" stroke="#fff" stroke-width="1.3"></circle><path d="M11.5 11V15.6M9.4 13.3H13.6" stroke="#fff"></path><path d="M14.4 16.6L18 21" stroke="currentColor" stroke-width="1.4"></path>`)}</div>
        <div class="s w blue">${S(25, 23, "0 0 25 23", svg`${F("M12.5 22.5C7 18 .3 13 .1 6.8C0 2.8 3 .2 6.3 .2C9.2 .2 11.4 1.8 12.5 4C13.6 1.8 15.8 .2 18.7 .2C22 .2 25 2.8 24.9 6.8C24.7 13 18 18 12.5 22.5Z")}<path d="M1 11.2H6L7.8 8L9.8 14.5L11.6 5L13.2 16.5L15 8.5L16.2 11.5H20" fill="none" stroke="#fff" stroke-width="1.2"></path>`)}</div>
        <div class="s blue">${S(20, 25, "0 0 20 25", F("M8.6 1.3a1.4 1.4 0 0 1 2.8 0Q17 3 17.2 10V14.5Q17.4 17.5 20 19.8H0Q2.6 17.5 2.8 14.5V10Q3 3 8.6 1.3ZM7 21.5H13Q12.3 24.5 10 24.5T7 21.5Z"))}</div>
        <div class="user">${S(33, 33, "0 0 33 33", F("M16.5 0a9 9 0 1 1 0 18a9 9 0 1 1 0-18ZM9.5 17.3Q16.5 22.5 23.5 17.3Q33 18 33 28.5Q32.5 32.8 29 32.8H4Q.5 32.8 0 28.5Q0 18 9.5 17.3Z"))}</div>
      </div>`;
  }
}

@customElement("select-box")
class SelectBox extends LitElement {
  @property() label = "";
  @property() icon = "";
  static styles = css`
    :host { flex: 1; height: 47px; box-sizing: border-box; border: 1px solid #d5d6dc; border-radius: 6px; background: #fff; display: flex; align-items: center;
      padding: 0 9px; font: 400 13.8px Inter, sans-serif; color: #4b4d57; letter-spacing: -.15px; }
    .ic { width: 31px; display: flex; color: #555; } .lab { flex: 1; } .chev { display: flex; color: #444; }
  `;
  render() {
    return html`<span class="ic">${this.icon === "building"
      ? S(20, 26, "0 0 20 26", L("M.8 .8H19.2V25.2H.8ZM3.5 3.5H8.5V6H3.5ZM11.5 3.5H16.5V6H11.5ZM3.5 8.5H8.5V11H3.5ZM11.5 8.5H16.5V11H11.5ZM3.5 13.5H8.5V16H3.5ZM11.5 13.5H16.5V16H11.5ZM3.5 19H8.5V22H3.5ZM12 25V19H16.5V25", 1.2))
      : S(22, 23, "0 0 22 23", L("M.8 22H21.3V.8H16V6H11.5V11.5H6.5V16.5H.8Z", 1.1))}</span>
      <span class="lab">${this.label}</span><span class="chev">${chevronDown}</span>`;
  }
}

@customElement("tag-list")
class TagList extends LitElement {
  static styles = css`
    :host { display: block; box-sizing: border-box; width: 371px; height: 402px; border: 1px solid #d8d9df; border-radius: 5px; background: #fff; }
    .row { height: 50px; display: flex; align-items: center; padding-left: 15px; font: 400 11.5px Inter, sans-serif; color: #6d6e78; letter-spacing: -.1px; }
    .dot { width: 13px; height: 13px; border-radius: 50%; background: #9d9d9d; margin: -4px 13px 0 0; }
    .tw { display: flex; margin-right: 9.5px; }
    .tx { margin-top: 1px; display: flex; align-items: center; gap: 3px; white-space: nowrap; }
  `;
  render() {
    return ["05", "07", "06", "03", "02", "04", "01", "08"].map((n) => html`
      <div class="row"><span class="dot"></span><span class="tw">${tower(25, 32)}</span>
        <span class="tx">Storage Site A ${n}
          ${S(12, 11, "0 0 12 11", svg`<path d="M5 .8Q6 -.6 7 .8L11.8 9.4Q12.3 11 11 11H1Q-.3 11 .2 9.4Z" fill="#e90000"></path><path d="M6 3.6V7M6 8V9.4" stroke="#fff" stroke-width="1.4"></path>`)}
          <span>(Offline)</span></span></div>`);
  }
}

@customElement("app-root")
class AppRoot extends LitElement {
  static styles = css`
    :host { display: block; box-sizing: border-box; width: 1990px; height: 1096px; padding: 37px 55px; background: #fff; overflow: hidden; font-family: Inter, "Noto Sans", sans-serif; }
    .window { position: relative; box-sizing: border-box; width: 1880px; height: 986px; border: 1px solid #0a0a0a; border-radius: 11px; overflow: hidden; display: flex; background: #eeeff5; }
    .shadow { border-radius: 11px; width: 1880px; height: 986px; box-shadow: 0 20px 38px rgba(0,0,0,.62), 0 0 14px rgba(0,0,0,.18); }
    .main { width: 1608px; flex: none; display: flex; flex-direction: column; }
    .content { display: flex; padding-left: 45px; gap: 27px; }
    .left { width: 1135px; flex: none; }
    .right { width: 371px; flex: none; }
    .head { height: 114px; padding-top: 28px; box-sizing: border-box; display: flex; align-items: flex-start; }
    h1 { margin: 0; font: 500 20px/38px Roboto, sans-serif; color: #3a3b43; width: 142px; letter-spacing: .1px; white-space: nowrap; }
    .crumb { flex: 1; height: 38px; border-left: 1px solid #d9dae2; display: flex; align-items: center; padding-left: 16px; color: #8a8b96; font-size: 13.5px; font-weight: 300; letter-spacing: .05px; }
    .crumb svg { margin-right: 26px; } .crumb span { margin-right: 5px; }
    .total { width: 139px; height: 76px; margin-right: -1px; box-sizing: border-box; border: 1px solid #dcdce4; border-bottom: 3px solid #3e97e5; border-radius: 7px; background: #fff; box-shadow: 0 0 14px rgba(90,90,140,.13); text-align: center; }
    .num { font: 600 31px/48px Inter, sans-serif; color: #4f5160; }
    .cap { font: 700 13px/28px "Noto Sans", sans-serif; color: #a8aaba; }
    .selects { display: flex; gap: 16px; margin-bottom: 16px; }
    .map { box-sizing: border-box; margin-left: 1px; width: 1130px; height: 680px; border: 2px solid #dcdce0; border-radius: 7px; background: #f8f8f8; overflow: hidden; display: grid; grid-template: 662px 1fr / 1113px 1fr; }
    .vs { display: flex; justify-content: center; padding-top: 3px; } .vs i { width: 8px; height: 582px; border-radius: 4px; background: #c0c0c0; }
    .hs { display: flex; align-items: center; padding-left: 3px; } .hs i { width: 992px; height: 8px; border-radius: 4px; background: #bfbfbf; }
    .tools { display: flex; margin-top: 26px; align-items: flex-start; font-size: 13.2px; color: #4b4d57; }
    .btn { height: 40px; box-sizing: border-box; padding-bottom: 4px; background: #0084cb; color: #fff; border-radius: 4px; display: flex; align-items: center; justify-content: center; gap: 4px; font-size: 13.6px; font-weight: 300; margin-right: 10px; border-top: 1px solid #2b7fb0; }
    .filter { width: 78px; } .full { width: 100px; margin-right: 25px; }
    .tl { height: 18px; line-height: 18px; width: 82px; white-space: nowrap; } .tl.e { margin-left: 41px; width: 87px; }
    .tog { width: 51px; height: 27px; margin-top: 2px; border-radius: 14px; background: #fff; border: 1px solid #e4e5ea; box-sizing: border-box; padding: 0 1px; display: flex; align-items: center; } .tog i { width: 24px; height: 24px; border-radius: 50%; background: #dadee8; }
    .quick { height: 114px; box-sizing: border-box; padding: 36px 0 0 0; display: flex; margin-left: -4px; width: 406px; }
    .q { width: 101.3px; flex: none; display: flex; flex-direction: column; align-items: center; font-size: 10.5px; color: #3f4148; white-space: nowrap; }
    .q div { height: 34px; display: flex; align-items: center; } .q span { margin-top: 13px; }
    .search { display: flex; margin: 0 0 13px 3px; height: 50px; width: 368px; }
    .field { width: 206px; height: 50px; box-sizing: border-box; border: 1px solid #0080c3; border-radius: 5px 0 0 5px; background: #fff; display: flex; align-items: center; padding-left: 9px; gap: 5px; font: 400 13.6px Roboto, sans-serif; color: #8a8a8a; }
    .go { width: 47px; background: #0080c3; color: #fff; border-radius: 0 5px 5px 0; font: 700 17px/48px "Noto Sans", sans-serif; text-align: center; }
    .sq { width: 50px; box-sizing: border-box; border: 1px solid #d3d4da; border-radius: 5px; background: #fff; margin-left: 8px; display: flex; align-items: center; justify-content: center; } .sq + .sq { margin-left: 7px; }
    .sb { width: 14px; background: #f9f9f9; border-left: 1px solid #e2e2e6; box-sizing: border-box; display: flex; justify-content: center; padding-top: 3px; } .sb i { width: 8px; height: 930px; border-radius: 4px; background: #c0c0c0; }
    .lang { position: absolute; left: 1709px; top: 946px; width: 135px; height: 38px; box-sizing: border-box; border: 1px solid #dcdde2; background: #fff; display: flex; align-items: center; padding-left: 9px; font-size: 13.9px; color: #222; }
    .lang b { font-weight: 400; margin: 0 21px 0 10px; }
  `;
  render() {
    const quick = [
      ["Evacuate", S(26, 28, "0 0 26 28", svg`<g fill="none" stroke="#2b7fb2" stroke-linecap="round" stroke-linejoin="round"><path d="M15.5 8L12 17" stroke-width="4.6"></path><path d="M15.5 8L9.5 6L7.2 10M16.5 9L20 13.5L24.5 12.5" stroke-width="2.2"></path><path d="M12 16.5L16 20L13.2 27M11.5 17L8.5 20.5L1.2 19.5" stroke-width="2.8"></path></g><circle cx="21" cy="3.2" r="3.1" fill="#2b7fb2"></circle>`)],
      ["Zone Alerts", S(27, 27, "0 0 27 27", svg`<circle cx="13.5" cy="13.5" r="13" fill="#0080c3"></circle><path d="M13.5 8.4Q17 9 17 13Q17 15.6 18 16.8H9Q10 15.6 10 13Q10 9 13.5 8.4ZM12 17.4H15Q14.6 18.8 13.5 18.8T12 17.4Z" fill="#fff"></path><path d="M8 10Q6.8 12.7 8 15.6M19 10Q20.2 12.7 19 15.6" fill="none" stroke="#fff" stroke-width=".9"></path>`)],
      ["Location History", S(25, 25, "0 0 25 25", svg`<g fill="none" stroke="#147ebd"><path d="M3 7A11 11 0 1 1 2.2 15" stroke-width="1.7"></path><path d="M7.5 9.5H18M7.5 12.5H18M7.5 15.5H18" stroke-width="1.8"></path><path d="M12.5 1.5V4M23.5 12.5H21M12.5 23.5V21" stroke-width="1.2"></path></g><path d="M.8 3.8L2 9.2L6.5 6.8Z" fill="#147ebd"></path>`)],
      ["Heatmap", S(26, 25, "0 0 26 25", svg`<path d="M13 .5C21 -.5 26 4 25.6 10C25.4 17 20 22 14 22.5C6 23 1 17 2 10C3 4 7 1 13 .5Z" fill="#5cb8ea"></path><path d="M2 12Q4 3 13 5Q21 8 19 15Q16 24 8 24.5Q-1 23 .5 15Z" fill="#2296d6"></path><circle cx="14.4" cy="10.8" r="7.2" fill="#0080c3"></circle>`)],
    ] as [string, unknown][];
    return html`
      <div class="shadow"><div class="window">
        <side-nav></side-nav>
        <div class="main">
          <top-bar></top-bar>
          <div class="content">
            <div class="left">
              <div class="head">
                <h1>Site Tracking</h1>
                <div class="crumb">${S(15, 14, "0 0 15 14", L("M1 7L7.5 .8L14 7M3 6V13.2H5.8V7.8H9.2V13.2H12V6", 1))}<span>-</span>Site Tracking</div>
                <div class="total"><div class="num">0</div><div class="cap">Total IN</div></div>
              </div>
              <div class="selects"><select-box icon="building" label="Storage Site A"></select-box><select-box icon="stairs" label="Level1"></select-box></div>
              <div class="map"><floor-plan></floor-plan><div class="vs"><i></i></div><div class="hs"><i></i></div><div></div></div>
              <div class="tools">
                <div class="btn filter">${S(13, 12, "0 0 13 12", F("M0 0H13L8.2 5.8V12L4.8 9.8V5.8Z"))}Filter</div>
                <div class="btn full">Full Screen</div>
                <div class="tl">View Live:</div><div class="tog"><i></i></div>
                <div class="tl e">Edit Mode:</div><div class="tog"><i></i></div>
              </div>
            </div>
            <div class="right">
              <div class="quick">${quick.map(([t, i]) => html`<div class="q"><div>${i}</div><span>${t}</span></div>`)}</div>
              <div class="search">
                <div class="field">${S(16, 16, "0 0 16 16", svg`<circle cx="6.5" cy="6.5" r="5.2" fill="none" stroke="#6f6f6f" stroke-width="2.2"></circle><path d="M10.4 10.4L15 15" stroke="#6f6f6f" stroke-width="2.6"></path>`)}Search for...</div>
                <div class="go">Go!</div>
                <div class="sq">${S(12, 12, "0 0 12 12", svg`<path d="M0 2H12M0 6.4H12M0 10.8H12" stroke="#555" stroke-width="1.5"></path>`)}</div>
                <div class="sq">${tower(18, 23)}</div>
              </div>
              <tag-list></tag-list>
            </div>
          </div>
        </div>
        <div class="sb"><i></i></div>
        <div class="lang">
          ${S(25, 25, "0 0 25 25", svg`<defs><clipPath id="c"><circle cx="12.5" cy="12.5" r="12.3"></circle></clipPath></defs>
            <g clip-path="url(#c)"><rect width="25" height="25" fill="#1f2a6b"></rect><path d="M0 0L25 25M25 0L0 25" stroke="#fff" stroke-width="5"></path><path d="M0 0L25 25M25 0L0 25" stroke="#cf1430" stroke-width="1.8"></path><path d="M12.5 0V25M0 12.5H25" stroke="#fff" stroke-width="7.5"></path><path d="M12.5 0V25M0 12.5H25" stroke="#cf1430" stroke-width="4.4"></path></g>`)}
          <b>English</b>${S(7, 12, "0 0 7 12", L("M1 1L5.8 6L1 11", 1.7))}
        </div>
      </div></div>`;
  }
}
